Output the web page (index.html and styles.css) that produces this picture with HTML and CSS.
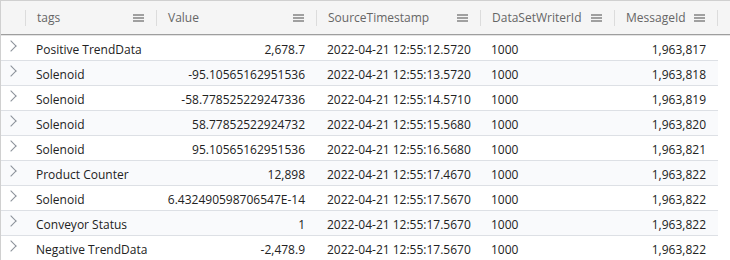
FILE: index.html
```html
<!DOCTYPE html>
<html lang="en">
<head>
    <meta charset="UTF-8">
    <title>Messages</title>
    <link rel="stylesheet" href="styles.css">
</head>
<body>
    <div class="grid">
        <div class="head">
            <div class="hcell expand"></div>
            <div class="hcell"><span>tags</span><i class="menu"></i></div>
            <div class="hcell"><span>Value</span><i class="menu"></i></div>
            <div class="hcell"><span>SourceTimestamp</span><i class="menu"></i></div>
            <div class="hcell"><span>DataSetWriterId</span><i class="menu"></i></div>
            <div class="hcell"><span>MessageId</span><i class="menu"></i></div>
        </div>

        <div class="row">
            <div class="cell expand"><i class="chev"></i></div>
            <div class="cell">Positive TrendData</div>
            <div class="cell num">2,678.7</div>
            <div class="cell">2022-04-21 12:55:12.5720</div>
            <div class="cell">1000</div>
            <div class="cell num">1,963,817</div>
        </div>
        <div class="row">
            <div class="cell expand"><i class="chev"></i></div>
            <div class="cell">Solenoid</div>
            <div class="cell num">-95.10565162951536</div>
            <div class="cell">2022-04-21 12:55:13.5720</div>
            <div class="cell">1000</div>
            <div class="cell num">1,963,818</div>
        </div>
        <div class="row">
            <div class="cell expand"><i class="chev"></i></div>
            <div class="cell">Solenoid</div>
            <div class="cell num">-58.778525229247336</div>
            <div class="cell">2022-04-21 12:55:14.5710</div>
            <div class="cell">1000</div>
            <div class="cell num">1,963,819</div>
        </div>
        <div class="row">
            <div class="cell expand"><i class="chev"></i></div>
            <div class="cell">Solenoid</div>
            <div class="cell num">58.77852522924732</div>
            <div class="cell">2022-04-21 12:55:15.5680</div>
            <div class="cell">1000</div>
            <div class="cell num">1,963,820</div>
        </div>
        <div class="row">
            <div class="cell expand"><i class="chev"></i></div>
            <div class="cell">Solenoid</div>
            <div class="cell num">95.10565162951536</div>
            <div class="cell">2022-04-21 12:55:16.5680</div>
            <div class="cell">1000</div>
            <div class="cell num">1,963,821</div>
        </div>
        <div class="row">
            <div class="cell expand"><i class="chev"></i></div>
            <div class="cell">Product Counter</div>
            <div class="cell num">12,898</div>
            <div class="cell">2022-04-21 12:55:17.4670</div>
            <div class="cell">1000</div>
            <div class="cell num">1,963,822</div>
        </div>
        <div class="row">
            <div class="cell expand"><i class="chev"></i></div>
            <div class="cell">Solenoid</div>
            <div class="cell num">6.432490598706547E-14</div>
            <div class="cell">2022-04-21 12:55:17.5670</div>
            <div class="cell">1000</div>
            <div class="cell num">1,963,822</div>
        </div>
        <div class="row">
            <div class="cell expand"><i class="chev"></i></div>
            <div class="cell">Conveyor Status</div>
            <div class="cell num">1</div>
            <div class="cell">2022-04-21 12:55:17.5670</div>
            <div class="cell">1000</div>
            <div class="cell num">1,963,822</div>
        </div>
        <div class="row">
            <div class="cell expand"><i class="chev"></i></div>
            <div class="cell">Negative TrendData</div>
            <div class="cell num">-2,478.9</div>
            <div class="cell">2022-04-21 12:55:17.5670</div>
            <div class="cell">1000</div>
            <div class="cell num">1,963,822</div>
        </div>
    </div>
</body>
</html>
```

FILE: styles.css
```css
body {
    margin: 0;
    font-family: "Open Sans", "Noto Sans", sans-serif;
    font-size: 12px;
    color: #222;
    background: #fff;
    overflow: hidden;
}

.grid {
    width: 729px;
    height: 259px;
    border-top: 1px solid #d0d0d0;
    border-left: 1px solid #d0d0d0;
    overflow: hidden;
}

.head {
    display: grid;
    grid-template-columns: 25px 131px 160px 164px 134px 103px;
    height: 33px;
    background: #f5f5f5;
    border-bottom: 1px solid #9e9e9e;
    box-shadow: 0 1px 0 #e4e4e4;
    margin-bottom: 1px;
}

.hcell {
    display: flex;
    align-items: center;
    justify-content: space-between;
    padding: 0 13px 0 11px;
    color: #666;
    position: relative;
}

.hcell::after {
    content: "";
    position: absolute;
    right: 0;
    top: 9px;
    height: 16px;
    border-right: 1px solid #dcdcdc;
}

.hcell.expand {
    padding: 0;
}

.menu {
    width: 11px;
    height: 8px;
    border-top: 2px solid #a0a0a0;
    border-bottom: 2px solid #a0a0a0;
    box-sizing: border-box;
    position: relative;
}

.menu::before {
    content: "";
    position: absolute;
    left: 0;
    right: 0;
    top: 1px;
    border-top: 2px solid #a0a0a0;
}

.row {
    display: grid;
    grid-template-columns: 25px 131px 160px 164px 134px 103px;
    width: 717px;
    height: 24px;
    border-bottom: 1px solid #dde0e5;
    align-items: center;
}

.row:nth-child(odd) {
    background: #f9fafc;
}

.cell {
    padding: 2px 12px 0 10px;
    white-space: nowrap;
    overflow: hidden;
}

.cell.num {
    text-align: right;
}

.cell.expand {
    padding: 0;
    align-self: stretch;
    position: relative;
}

.chev {
    position: absolute;
    left: 6px;
    top: 6px;
    width: 7px;
    height: 7px;
    border-top: 1px solid #8a9099;
    border-right: 1px solid #8a9099;
    transform: rotate(45deg);
}
```
